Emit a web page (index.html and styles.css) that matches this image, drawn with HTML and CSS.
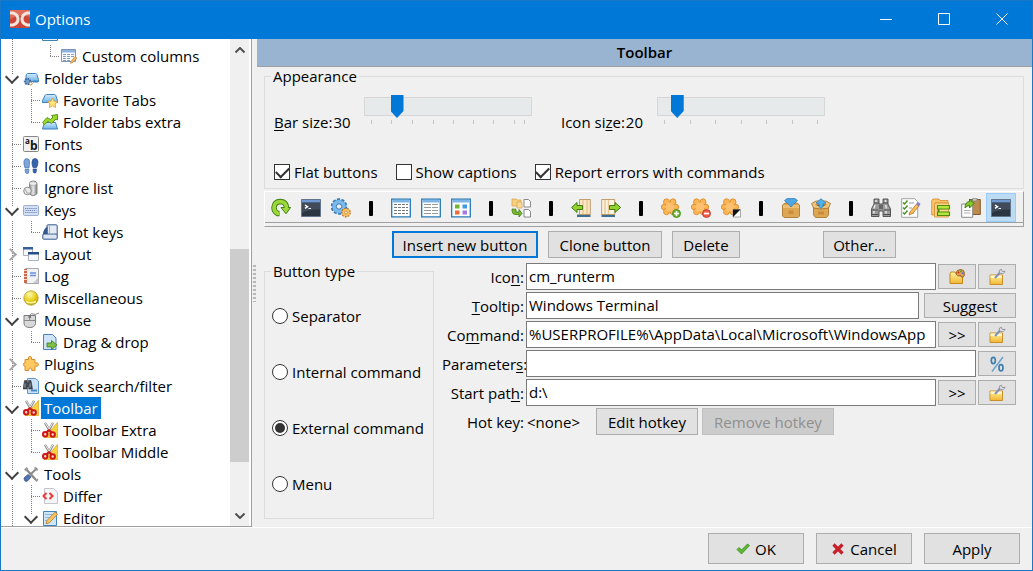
FILE: index.html
```html
<!DOCTYPE html>
<html lang="en">
<head>
<meta charset="utf-8">
<title>Options</title>
<link rel="stylesheet" href="styles.css">
</head>
<body>
<svg class="sprite" aria-hidden="true">
  <defs>
    <linearGradient id="gold" x1="0" y1="0" x2="0" y2="1"><stop offset="0" stop-color="#fff3a0"/><stop offset="1" stop-color="#f2b632"/></linearGradient>
    <linearGradient id="sky" x1="0" y1="0" x2="0" y2="1"><stop offset="0" stop-color="#d4ecfb"/><stop offset="1" stop-color="#6cb2e8"/></linearGradient>
    <linearGradient id="steel" x1="0" y1="0" x2="1" y2="0"><stop offset="0" stop-color="#8a8a8a"/><stop offset=".5" stop-color="#e8e8e8"/><stop offset="1" stop-color="#777"/></linearGradient>
    <radialGradient id="ball" cx=".4" cy=".25" r=".8"><stop offset="0" stop-color="#fffbb0"/><stop offset=".55" stop-color="#e8cf1c"/><stop offset="1" stop-color="#b99a00"/></radialGradient>
  </defs>
  <symbol id="i-cols" viewBox="0 0 16 16"><path d="M.5 1.500h14v12H.5z" fill="#f6f8fb" stroke="#8095b5"/><path d="M1 2h13v2.500H1z" fill="#8fb4e4"/><path d="M2 6.500h11M2 8.500h11M2 10.500h8M2 12.500h7" stroke="#8aa0bf"/><path d="M5.500 5v8M9.500 5v8" stroke="#fff"/><path d="M10 13.500l4-5 2 1.500-4 4.500-2.500.8z" fill="#f4b860" stroke="#b97b35" stroke-width=".6"/></symbol>
  <symbol id="i-ftabs" viewBox="0 0 16 16"><path d="M4.500 3.500h8q1 0 1.300 1l1.700 5v2H3V6q.3-2.500 1.500-2.500z" fill="url(#sky)" stroke="#3f83c3"/><path d="M10 11.500h5" stroke="#3f83c3" stroke-width="2"/><circle cx="4.500" cy="11.500" r="2.700" fill="#6fa0d6" stroke="#37659e" stroke-width="2" stroke-dasharray="1.500 1"/><circle cx="7.700" cy="13.500" r="1.500" fill="#fff" stroke="#b98b40"/></symbol>
  <symbol id="i-fav" viewBox="0 0 16 16"><path d="M4.500 2.500h8q1 0 1.300 1l1.700 5v2H.5v-2L3 3.500q.5-1 1.500-1z" fill="url(#sky)" stroke="#3f83c3"/><path d="M10.500 6l1.600 3.200 3.600.4-2.600 2.400.6 3.500-3.200-1.700-3.200 1.700.7-3.500L5.400 9.600l3.500-.4z" fill="#ffe27c" stroke="#d79c38" stroke-width=".8"/></symbol>
  <symbol id="i-extra" viewBox="0 0 16 16"><path d="M2.500 8.500h11l2 6.500H.5z" fill="url(#sky)" stroke="#3f83c3"/><path d="M.5 8.500L5 3.500 8.500 5.500l2.500-2.500L9.500 1.500l6-1V6l-1.500-1L9.500 9.500 6 7.500 2.500 10.500z" fill="#9ad82a" stroke="#4c8d10" stroke-width=".9"/></symbol>
  <symbol id="i-feet" viewBox="0 0 16 16"><path d="M1 3q.5-2.500 3-2.500 3 .5 2.500 4L6 10H2Q.5 6 1 3zM2 11.500h4L5.500 15q-1.500 1.200-3-.3z" fill="#7ba7dc" stroke="#456fa8" stroke-width=".7"/><path d="M9 4q.2-3.500 3-3.500 3 .3 3 3.500 0 3-1.500 5.500H10Q8.800 7 9 4zM10 11h3.500l-.4 3.500q-1.500 1-2.700 0z" fill="#3665b0" stroke="#244a87" stroke-width=".7"/></symbol>
  <symbol id="i-ignore" viewBox="0 0 16 16"><path d="M6.500 3.500Q6.500 1 10 1q4 0 4 2.500v10q-1 2-4 2t-3.500-2z" fill="url(#steel)" stroke="#888"/><ellipse cx="10" cy="3.500" rx="3.500" ry="1.800" fill="#eee" stroke="#aaa" stroke-width=".6"/><circle cx="4.500" cy="11" r="3.800" fill="#e9e9e9" stroke="#8d8d8d"/><path d="M2 9l2 4h3" fill="none" stroke="#aaa"/></symbol>
  <symbol id="i-keys" viewBox="0 0 16 16"><rect x=".5" y="3.500" width="15" height="10" rx="1" fill="#d4e0f4" stroke="#9badd0"/><path d="M2 6.500h12M2.500 8.500h11M2 10.500h12" stroke="#7189bb" stroke-dasharray="1.300 .8"/></symbol>
  <symbol id="i-hot" viewBox="0 0 16 16"><rect x="5" y=".8" width="10.200" height="11" rx="1" fill="#e4ebf4" stroke="#35598e"/><path d="M.8 11Q1 5 5.500 2.500V12z" fill="#32558c"/><rect x=".8" y="10" width="14.400" height="5.200" rx="1" fill="#dce6f3" stroke="#35598e"/><path d="M7.500 2v7.500H13" fill="none" stroke="#a2b3cc"/></symbol>
  <symbol id="i-layout" viewBox="0 0 16 16"><path d="M.5 1.500h9v8h-9z" fill="#f7f8fa" stroke="#a9b1bf"/><path d="M0 1h10v2.500H0z" fill="#35609a"/><path d="M5.500 6.500h10v8h-10z" fill="#f7f8fa" stroke="#a9b1bf"/><path d="M5 6h11v2.500H5z" fill="#264f8a"/></symbol>
  <symbol id="i-log" viewBox="0 0 16 16"><path d="M2.500.5h13v15h-13z" fill="#f2f2f4" stroke="#a8a8ad"/><path d="M1 1h3v14H1z" fill="#c96a4b"/><path d="M1 2.500h4M1 5.500h4M1 8.500h4M1 11.500h4" stroke="#f4d5c8"/><path d="M7 5h6M7 7.500h6" stroke="#6c8ee0" stroke-width="1.500"/><path d="M15 10l-5 5h5z" fill="#c9c9ce"/></symbol>
  <symbol id="i-misc" viewBox="0 0 16 16"><circle cx="8" cy="8" r="7.200" fill="url(#ball)" stroke="#b5a132" stroke-width=".8"/><path d="M3 11.500q5 2.500 10 0" fill="none" stroke="#fff59a" stroke-width="1.500"/></symbol>
  <symbol id="i-mouse" viewBox="0 0 16 16"><path d="M7 3Q8 .8 10 2t6-1" fill="none" stroke="#888"/><path d="M1 3.500h11.500v8q-.5 4-5.700 4T1 11.500z" fill="#d8d8d8" stroke="#7b7b7b"/><path d="M1 8.500h11.500M6.700 3.500v5" stroke="#888"/><path d="M5.500 3h2.500v3H5.500z" fill="#777"/></symbol>
  <symbol id="i-drag" viewBox="0 0 16 16"><path d="M1.500.5h9l3.500 3.500v11.500H1.500z" fill="#cfe4f8" stroke="#4a82bd"/><path d="M5 9h4.500V6.500L15 11l-5.500 4.500V13H5z" fill="#7fbf46" stroke="#3c7b1b" stroke-width=".8"/></symbol>
  <symbol id="i-plug" viewBox="0 0 16 16"><path d="M2 3.500h3.500Q4.500.5 7 .5t1.500 3H12V7q3.500-1 3.500 1.500T12 10v4.500H8.800q.7-2.500-1.500-2.500t-1.500 2.500H2V10Q.2 10 .2 8.500T2 7z" fill="#fbc95f" stroke="#d98c2b"/></symbol>
  <symbol id="i-quick" viewBox="0 0 16 16"><path d="M4.500.5h8L15.500 3v12.500H4.500z" fill="#cbe1f8" stroke="#5f95cd"/><path d="M8 12.500h6" stroke="#4a88c8" stroke-width="2"/><path d="M1.500 2.500h2.500V5h1.500V2.500H8L9.500 11H5.700V8.500H4V11H0z" fill="#444b55" stroke="#23272d" stroke-width=".5"/><path d="M2 5.500v4M7 5.500v4" stroke="#9aa3ae"/></symbol>
  <symbol id="i-cut" viewBox="0 0 16 16"><path d="M15.700.3v15.400H2z" fill="#f8d23f" stroke="#d6a21a" stroke-width=".7"/><path d="M3 .8l5.500 9M11 .8L6 10" stroke="#8d8d8d" stroke-width="2.400"/><path d="M3.300 1l5 8M10.700 1L6 9" stroke="#ececec" stroke-width="1"/><circle cx="3.200" cy="12.300" r="2.200" fill="#f6dcd0" stroke="#cf1717" stroke-width="2"/><circle cx="10.700" cy="12.500" r="2.200" fill="#f6dcd0" stroke="#cf1717" stroke-width="2"/><path d="M4 10.500l3-2.500 3 2.700" fill="none" stroke="#cf1717" stroke-width="2"/></symbol>
  <symbol id="i-tools" viewBox="0 0 16 16"><path d="M3 3l10 11" stroke="#888" stroke-width="2.200"/><path d="M1 3.500L3.500 1 5.500 3 3 5.500zM12 14.500l2.500-2 1 1.500-2 2z" fill="#999"/><path d="M14 2L7 9" stroke="#8a8a8a" stroke-width="2"/><path d="M12 1l.5 2.500L15 4" fill="none" stroke="#999" stroke-width="1.500"/><path d="M1 12l4-3.500L8 11l-3.500 4q-3 1.500-3.500-3z" fill="#5274b3" stroke="#33507f" stroke-width=".8"/></symbol>
  <symbol id="i-differ" viewBox="0 0 16 16"><path d="M2.500.5h9l4 4v11h-13z" fill="#f5f5f7" stroke="#c4c4ca"/><path d="M4.500 5L1.500 8l3 3M7.500 5l3 3-3 3" fill="none" stroke="#e93a36" stroke-width="2"/></symbol>
  <symbol id="i-edit" viewBox="0 0 16 16"><path d="M1.500 1.500h13v14h-13z" fill="#cfe5f9" stroke="#4583bf"/><path d="M3 4.500h9M3 7.500h7M3 10.500h5" stroke="#8bb8e2"/><path d="M5 10.500l8-8.500 2.500 2.200-8 8.500-3.500 1z" fill="#fbc461" stroke="#b57a2a" stroke-width=".8"/></symbol>

  <symbol id="t-refresh" viewBox="0 0 20 20"><path d="M8.500 15.500H6.500Q2.800 13 3 9.300 3.500 3.700 9.500 3.500 15.500 4 15.500 10" fill="none" stroke="#3f7d12" stroke-width="5.400"/><path d="M10 9.500h9.600L15 15.800z" fill="#9cd83a" stroke="#3f7d12"/><path d="M8 15.500H6.500Q2.800 13 3 9.300 3.500 3.700 9.500 3.500 15.500 4 15.500 10.500" fill="none" stroke="#9cd83a" stroke-width="3.600"/></symbol>
  <symbol id="t-term" viewBox="0 0 20 20"><path d="M.5 1.500h19v17H.5z" fill="#2b3441" stroke="#63758c"/><path d="M1 2h18v2.500H1z" fill="#6f9bd2"/><path d="M1 5h18v6.500Q8 11 1 15z" fill="#414b59"/><path d="M4 7l2.500 1.700L4 10.400" fill="none" stroke="#fff" stroke-width="1.500"/><path d="M7.500 10.500H10" stroke="#eee"/></symbol>
  <symbol id="t-gears" viewBox="0 0 20 20"><circle cx="8" cy="8.500" r="7" fill="#6eaee4" stroke="#387bb7" stroke-width="2.600" stroke-dasharray="3 1.400"/><circle cx="8" cy="8.500" r="6.600" fill="#7bb9ec"/><circle cx="8" cy="8.500" r="2.700" fill="#f0f0f0" stroke="#387bb7"/><circle cx="15" cy="14.500" r="3.900" fill="#f7bb56" stroke="#bd7921" stroke-width="2" stroke-dasharray="1.700 1"/><circle cx="15" cy="14.500" r="3.600" fill="#f9c268"/><circle cx="15" cy="14.500" r="1.400" fill="#f6f6f6" stroke="#bd7921" stroke-width=".7"/></symbol>
  <symbol id="t-grid" viewBox="0 0 20 20"><path d="M.7 1.200h18.600v17.600H.7z" fill="#fff" stroke="#2779b5" stroke-width="1.300"/><path d="M1.500 2h17v2.500h-17z" fill="#7cb5e5"/><path d="M3 6.500h14M3 9.500h14M3 12.500h14M3 15.500h14" stroke="#777" stroke-dasharray="3 1"/></symbol>
  <symbol id="t-list" viewBox="0 0 20 20"><path d="M.7 1.200h18.600v17.600H.7z" fill="#fff" stroke="#2779b5" stroke-width="1.300"/><path d="M1.500 2h17v2.500h-17z" fill="#7cb5e5"/><path d="M3 6.500h7M3 9.500h7M3 12.500h7M3 15.500h7M11 6.500h6M11 9.500h6M11 12.500h6M11 15.500h6" stroke="#999"/></symbol>
  <symbol id="t-thumb" viewBox="0 0 20 20"><path d="M.7 1.200h18.600v17.600H.7z" fill="#fff" stroke="#2779b5" stroke-width="1.300"/><path d="M1.500 2h17v2.500h-17z" fill="#7cb5e5"/><path d="M4 6.500h4.500v4H4z" fill="#71b62d"/><path d="M11.500 6.500H16v4h-4.500z" fill="#3e9ae8"/><path d="M4 12.500h4.500v4H4z" fill="#ef6d35"/><path d="M11.500 12.500H16v4h-4.500z" fill="#a27be8"/></symbol>
  <symbol id="t-branch" viewBox="0 0 20 20"><path d="M1 1h4l1 1h4v6H1z" fill="#f8cf80" stroke="#d59d44" stroke-width=".7"/><path d="M6 4h4l1 1v5H6z" fill="#fbdc9b" stroke="#d59d44" stroke-width=".7"/><path d="M1 11l4 .2V14h3v-2.500l3 4L8 19v-2.500H3.500Q1 16 1 11z" fill="#79ba27" stroke="#407b12" stroke-width=".8"/><path d="M13 1.500h4.500l2 2V9H13zM13 11.500h4.500l2 2V19H13z" fill="#fff" stroke="#888" stroke-width="1"/></symbol>
  <symbol id="t-left" viewBox="0 0 20 20"><path d="M6 16.500h13.500V19H6z" fill="#3d6d90"/><path d="M8.500 1.500h10.800v15H8.500z" fill="#fbe6c6" stroke="#b58a54" stroke-width=".8"/><path d="M12 2v14M16 2v14" stroke="#e9c797" stroke-width="1.500"/><path d="M.6 9.500L6 4.500v3h5.500v4H6v3z" fill="#92d12e" stroke="#407b12"/></symbol>
  <symbol id="t-right" viewBox="0 0 20 20"><path d="M.5 16.500H14V19H.5z" fill="#3d6d90"/><path d="M.7 1.500h13v15H.7z" fill="#fdf3e2" stroke="#b58a54" stroke-width=".8"/><path d="M4 2v14M7.500 2v14" stroke="#e9c797" stroke-width="1.500"/><path d="M19.600 9.500L14 4.500v3H8.500v4H14v3z" fill="#92d12e" stroke="#407b12"/></symbol>
  <symbol id="flower" viewBox="0 0 20 20"><g fill="#fbb654" stroke="#d88628" stroke-width=".8"><ellipse cx="5.500" cy="4.200" rx="3" ry="3.400"/><ellipse cx="12" cy="4.200" rx="3" ry="3.400"/><ellipse cx="3.500" cy="9" rx="3.300" ry="2.700"/><ellipse cx="14.500" cy="9" rx="3.300" ry="2.700"/><ellipse cx="5.500" cy="13.500" rx="3" ry="3.300"/><ellipse cx="12" cy="13.500" rx="3" ry="3.300"/></g><circle cx="9" cy="9" r="4.500" fill="#fdc071"/></symbol>
  <symbol id="t-add" viewBox="0 0 20 20"><use href="#flower"/><circle cx="15.500" cy="15.500" r="4" fill="#69b82a" stroke="#438716" stroke-width=".8"/><path d="M13 15.500h5M15.500 13v5" stroke="#fff" stroke-width="1.500"/></symbol>
  <symbol id="t-sub" viewBox="0 0 20 20"><use href="#flower"/><circle cx="15.500" cy="15.500" r="4" fill="#ed5b47" stroke="#bc3527" stroke-width=".8"/><path d="M13 15.500h5" stroke="#fff" stroke-width="1.700"/></symbol>
  <symbol id="t-inv" viewBox="0 0 20 20"><use href="#flower"/><path d="M12 11.500h7.500V19H12z" fill="#fff" stroke="#888" stroke-width=".7"/><path d="M12 11.500h7.500L12 19z" fill="#111"/></symbol>
  <symbol id="t-pack" viewBox="0 0 20 20"><path d="M1.500 7l2.500-2h12l2.500 2v11l-1.500 1.500H3L1.500 18z" fill="#dda653" stroke="#a66f26" stroke-width=".8"/><path d="M2 7h16v3H2z" fill="#edbf74"/><path d="M7.500 12.500h5v3.500h-5z" fill="#c98c3a"/><path d="M3.500 2.500L6 .6h8l2.500 1.900L13.500 5.500H13L10 9 7 5.500h-.5z" fill="#4fa8e4" stroke="#2579b6" stroke-width=".7"/></symbol>
  <symbol id="t-unpack" viewBox="0 0 20 20"><path d="M2.500 8h15v9l-2 2.500h-11l-2-2.500z" fill="#dda653" stroke="#a66f26" stroke-width=".8"/><path d="M.5 5.500L5 3h10l4.500 2.500-2 4.500L10 11 2.500 10z" fill="#f0c67e" stroke="#a66f26" stroke-width=".8"/><path d="M4 6.500h12L10 9.500z" fill="#8b5c22"/><path d="M7 13.500h6v3H7z" fill="#c98c3a"/><path d="M10 .7l5 4.300-3 1v2.500L10 10.500 8 8.500V6L5 5z" fill="#4fb1ea" stroke="#2579b6" stroke-width=".7"/></symbol>
  <symbol id="t-bino" viewBox="0 0 20 20"><path d="M3 1h5v5h4V1h5v5l2.500 5v7.500H12V13H8v5.500H.5V11L3 6z" fill="#9a9a9a" stroke="#4b4b4b" stroke-width=".9"/><path d="M1 12h6.500M12.500 12H19M3 5h5M12 5h5M1 16.500h6.500M12.500 16.500H19" stroke="#505050" stroke-width="1.200"/><path d="M8 7h4v4H8z" fill="#666"/><path d="M5 2v2M14.500 2v2M4 7l-1 3.500M14.500 7l1 3.500M3 13v2.500M15 13v2.500" stroke="#e6e6e6" stroke-width="1.500"/></symbol>
  <symbol id="t-check" viewBox="0 0 20 20"><path d="M.7.7h13l3 3v15.600H.7z" fill="#fff" stroke="#999" stroke-width=".9"/><path d="M2 4.500L3.500 6l3-3.500M2 9.500L3.500 11l3-3.500M2 14.500L3.500 16l3-3.500" fill="none" stroke="#438f1f" stroke-width="1.400"/><path d="M8 5h5M8 10h3M8 15h5" stroke="#999"/><path d="M9 14l6.500-8L18 8l-6.500 7.500L8 17z" fill="#fbbc51" stroke="#a46f2b" stroke-width=".7"/><path d="M15 6l2-2 2.500 2L18 8.500z" fill="#8a7bd4"/></symbol>
  <symbol id="t-folders" viewBox="0 0 20 20"><path d="M.7 2.500L2 1h6l1 1.500h8V5H4v12H.7z" fill="#fbc46a" stroke="#d68a2d" stroke-width=".8"/><path d="M3.500 6.500l1-1.500h13v14h-14z" fill="#fbd489" stroke="#d68a2d" stroke-width=".8"/><path d="M6.500 7.500h12v3.500h-12zM6.500 14h12v3.500h-12z" fill="#b4e63c" stroke="#508b12" stroke-width="1.200"/><path d="M7.500 11v3" stroke="#508b12" stroke-width="2"/></symbol>
  <symbol id="t-clip" viewBox="0 0 20 20"><path d="M9 1.500h10.300v15H9z" fill="#bd8a4e" stroke="#825a2c"/><path d="M11.500.5h4.500v2.500h-4.500z" fill="#c9c9c9" stroke="#777" stroke-width=".6"/><path d="M.7 6h11v13.300H.7z" fill="#fff" stroke="#888"/><path d="M3 12.500h6.500M3 15h6.500" stroke="#aaa"/><path d="M4 10Q4 4 8.500 3.500V1L13 5.500 8.500 10V7.500Q6 7.500 4 10z" fill="#85c92d" stroke="#407b12"/></symbol>

  <symbol id="b-wrench" viewBox="0 0 18 18"><path d="M2 7h12.500v9.500H2z" fill="url(#gold)" stroke="#c98f2b"/><path d="M2.500 7.500h11.500v2.500H2.500z" fill="#fff7c8"/><path d="M7 10l5-5.500" stroke="#818fbd" stroke-width="2"/><path d="M13.500 1.300q-3 .2-2.200 3l1.500 1.200q3.500.8 4.200-2.500l-2 .7-1.300-1z" fill="#dedee6" stroke="#8d8d99" stroke-width=".9"/></symbol>
  <symbol id="b-paint" viewBox="0 0 18 18"><path d="M2 5.500l1-1.500h4l1 1.500h6.500v10H2z" fill="url(#gold)" stroke="#c5861d"/><path d="M8 5.500q.5-4 4.500-4t4 4-2.500 3.500q-1.500 0-1.500-1.500Q9 9 8 5.500z" fill="#e0a04e" stroke="#8d4b19" stroke-width=".8"/><circle cx="10.500" cy="4.500" r="1" fill="#d42b20"/><circle cx="13" cy="3.300" r="1" fill="#4fae2b"/><circle cx="14.800" cy="5.200" r="1" fill="#4b79dd"/></symbol>
  <symbol id="b-pct" viewBox="0 0 18 18"><path d="M15 2L4 16.500" stroke="#6ba3cb" stroke-width="1.500"/><ellipse cx="5.300" cy="5.500" rx="2" ry="3.200" fill="none" stroke="#3c7fae" stroke-width="1.700"/><ellipse cx="13" cy="12.800" rx="2" ry="3.200" fill="none" stroke="#3c7fae" stroke-width="1.700"/></symbol>
</svg>

<div class="window">
  <header class="titlebar">
    <svg class="logo" viewBox="0 0 20 18"><path d="M0 0h20v18H0z" fill="#cc4638"/><path d="M0 0h20v7Q10 3 0 9z" fill="#df6b5a"/><path d="M0 3h3Q8 4.500 8 9t-5 6H0M20 3h-3q-5 1.500-5 6t5 6h3" fill="none" stroke="#f3e3da" stroke-width="3"/></svg>
    <h1>Options</h1>
    <button class="winbtn" type="button" aria-label="Minimize"><svg viewBox="0 0 12 12"><path d="M0 6.500h12"/></svg></button>
    <button class="winbtn" type="button" aria-label="Maximize"><svg viewBox="0 0 12 12"><path d="M.5.5h11v11H.5z"/></svg></button>
    <button class="winbtn" type="button" aria-label="Close"><svg viewBox="0 0 12 12"><path d="M.5.5l11 11M11.500.5l-11 11"/></svg></button>
  </header>

  <div class="main">
    <nav class="side">
      <ul class="tree" role="tree">
        <li><i class="v"></i><i></i><svg class="ico" viewBox="0 0 16 16"><path d="M.5 2.500h15v12H.5z" fill="#e8f2fb" stroke="#3f83b3"/></svg><span></span></li>
        <li><i class="v"></i><i></i><i class="l"></i><svg class="ico"><use href="#i-cols"/></svg><span>Custom columns</span></li>
        <li><i class="v open"></i><svg class="ico"><use href="#i-ftabs"/></svg><span>Folder tabs</span></li>
        <li><i class="v"></i><i class="t"></i><svg class="ico"><use href="#i-fav"/></svg><span>Favorite Tabs</span></li>
        <li><i class="v"></i><i class="l"></i><svg class="ico"><use href="#i-extra"/></svg><span>Folder tabs extra</span></li>
        <li><i class="t"></i><svg class="ico letters" viewBox="0 0 16 16"><rect x=".5" y=".5" width="15" height="15" rx="1"/><text x="2" y="8" font-size="8">a</text><text x="7" y="14" font-size="12">b</text></svg><span>Fonts</span></li>
        <li><i class="t"></i><svg class="ico"><use href="#i-feet"/></svg><span>Icons</span></li>
        <li><i class="t"></i><svg class="ico"><use href="#i-ignore"/></svg><span>Ignore list</span></li>
        <li><i class="v open"></i><svg class="ico"><use href="#i-keys"/></svg><span>Keys</span></li>
        <li><i class="v"></i><i class="l"></i><svg class="ico"><use href="#i-hot"/></svg><span>Hot keys</span></li>
        <li><i class="v shut"></i><svg class="ico"><use href="#i-layout"/></svg><span>Layout</span></li>
        <li><i class="t"></i><svg class="ico"><use href="#i-log"/></svg><span>Log</span></li>
        <li><i class="t"></i><svg class="ico"><use href="#i-misc"/></svg><span>Miscellaneous</span></li>
        <li><i class="v open"></i><svg class="ico"><use href="#i-mouse"/></svg><span>Mouse</span></li>
        <li><i class="v"></i><i class="l"></i><svg class="ico"><use href="#i-drag"/></svg><span>Drag &amp; drop</span></li>
        <li><i class="v shut"></i><svg class="ico"><use href="#i-plug"/></svg><span>Plugins</span></li>
        <li><i class="t"></i><svg class="ico"><use href="#i-quick"/></svg><span>Quick search/filter</span></li>
        <li class="selected"><i class="v open"></i><svg class="ico"><use href="#i-cut"/></svg><span>Toolbar</span></li>
        <li><i class="v"></i><i class="t"></i><svg class="ico"><use href="#i-cut"/></svg><span>Toolbar Extra</span></li>
        <li><i class="v"></i><i class="l"></i><svg class="ico"><use href="#i-cut"/></svg><span>Toolbar Middle</span></li>
        <li><i class="v open"></i><svg class="ico"><use href="#i-tools"/></svg><span>Tools</span></li>
        <li><i class="v"></i><i class="t"></i><svg class="ico"><use href="#i-differ"/></svg><span>Differ</span></li>
        <li><i class="v"></i><i class="v open"></i><svg class="ico"><use href="#i-edit"/></svg><span>Editor</span></li>
      </ul>
      <div class="scrollbar">
        <button type="button" aria-label="Scroll up"><svg viewBox="0 0 10 6"><path d="M.5 5.500L5 1l4.500 4.500"/></svg></button>
        <div class="track"><div class="thumb"></div></div>
        <button type="button" aria-label="Scroll down"><svg viewBox="0 0 10 6"><path d="M.5.5L5 5 9.500.5"/></svg></button>
      </div>
    </nav>
    <div class="splitter"><div class="grip"></div></div>

    <main class="page">
      <h2>Toolbar</h2>
      <div class="content">
        <fieldset class="appearance">
          <legend>Appearance</legend>
          <div class="sizes">
            <label for="bar"><u>B</u>ar size:<output>30</output></label>
            <div class="slider">
              <input id="bar" type="range" min="20" max="80" value="30">
              <svg viewBox="0 0 168 5"><path d="M7.500 1v4M27.500 1v4M48.500 1v4M69.500 1v4M89.500 1v4M109.500 1v4M129.500 1v4M150.500 1v4M160.500 1v4"/></svg>
            </div>
            <label for="icosize" class="second">Icon si<u>z</u>e:<output>20</output></label>
            <div class="slider">
              <input id="icosize" type="range" min="16" max="64" value="20">
              <svg viewBox="0 0 168 5"><path d="M7.500 1v4M33.500 1v4M58.500 1v4M84.500 1v4M109.500 1v4M135.500 1v4M160.500 1v4"/></svg>
            </div>
          </div>
          <div class="checks">
            <label><input type="checkbox" checked>Flat buttons</label>
            <label><input type="checkbox">Show captions</label>
            <label><input type="checkbox" checked>Report errors with commands</label>
          </div>
        </fieldset>

        <div class="toolbar" role="toolbar">
          <button type="button" aria-label="Refresh"><svg><use href="#t-refresh"/></svg></button>
          <button type="button" aria-label="Terminal"><svg><use href="#t-term"/></svg></button>
          <button type="button" aria-label="Options"><svg><use href="#t-gears"/></svg></button>
          <div class="sep"></div>
          <button type="button" aria-label="Brief view"><svg><use href="#t-grid"/></svg></button>
          <button type="button" aria-label="Columns view"><svg><use href="#t-list"/></svg></button>
          <button type="button" aria-label="Thumbnails view"><svg><use href="#t-thumb"/></svg></button>
          <div class="sep"></div>
          <button type="button" aria-label="Flat view"><svg><use href="#t-branch"/></svg></button>
          <div class="sep"></div>
          <button type="button" aria-label="Back"><svg><use href="#t-left"/></svg></button>
          <button type="button" aria-label="Forward"><svg><use href="#t-right"/></svg></button>
          <div class="sep"></div>
          <button type="button" aria-label="Select group"><svg><use href="#t-add"/></svg></button>
          <button type="button" aria-label="Unselect group"><svg><use href="#t-sub"/></svg></button>
          <button type="button" aria-label="Invert selection"><svg><use href="#t-inv"/></svg></button>
          <div class="sep"></div>
          <button type="button" aria-label="Pack"><svg><use href="#t-pack"/></svg></button>
          <button type="button" aria-label="Unpack"><svg><use href="#t-unpack"/></svg></button>
          <div class="sep"></div>
          <button type="button" aria-label="Search"><svg><use href="#t-bino"/></svg></button>
          <button type="button" aria-label="Multi-rename"><svg><use href="#t-check"/></svg></button>
          <button type="button" aria-label="Synchronize"><svg><use href="#t-folders"/></svg></button>
          <button type="button" aria-label="Copy names"><svg><use href="#t-clip"/></svg></button>
          <button type="button" class="pressed" aria-label="Windows Terminal"><svg><use href="#t-term"/></svg></button>
        </div>

        <div class="actions">
          <button type="button" class="btn default wide">Insert new button</button>
          <button type="button" class="btn clone">Clone button</button>
          <button type="button" class="btn small">Delete</button>
          <button type="button" class="btn other">Other...</button>
        </div>

        <div class="detail">
          <fieldset class="types">
            <legend>Button type</legend>
            <label><input type="radio" name="type">Separator</label>
            <label><input type="radio" name="type">Internal command</label>
            <label><input type="radio" name="type" checked>External command</label>
            <label><input type="radio" name="type">Menu</label>
          </fieldset>
          <div class="form">
            <label for="f-icon">Ico<u>n</u>:</label>
            <div class="row"><input id="f-icon" type="text" value="cm_runterm"><button type="button" class="btn sq" aria-label="Choose icon"><svg><use href="#b-paint"/></svg></button><button type="button" class="btn sq" aria-label="Icon path"><svg><use href="#b-wrench"/></svg></button></div>
            <label for="f-tip"><u>T</u>ooltip:</label>
            <div class="row tip"><input id="f-tip" type="text" value="Windows Terminal"><button type="button" class="btn sq suggest">Suggest</button></div>
            <label for="f-cmd">Co<u>m</u>mand:</label>
            <div class="row"><input id="f-cmd" type="text" value="%USERPROFILE%\AppData\Local\Microsoft\WindowsApp"><button type="button" class="btn sq">&gt;&gt;</button><button type="button" class="btn sq" aria-label="Command path"><svg><use href="#b-wrench"/></svg></button></div>
            <label for="f-par">Parameter<u>s</u>:</label>
            <div class="row"><input id="f-par" type="text" value=""><button type="button" class="btn sq" aria-label="Variables"><svg><use href="#b-pct"/></svg></button></div>
            <label for="f-start">Start pat<u>h</u>:</label>
            <div class="row"><input id="f-start" type="text" value="d:\"><button type="button" class="btn sq">&gt;&gt;</button><button type="button" class="btn sq" aria-label="Start path options"><svg><use href="#b-wrench"/></svg></button></div>
            <span class="lab">Hot key:</span>
            <div class="row hot"><span>&lt;none&gt;</span><button type="button" class="btn edit">Edit hotkey</button><button type="button" class="btn remove" disabled>Remove hotkey</button></div>
          </div>
        </div>
      </div>
    </main>
  </div>

  <footer class="footer">
    <button type="button" class="btn"><svg viewBox="0 0 14 12"><path d="M1 6.500l2-2 2.500 2.500L11.500 1l2 1.500-8 8.500z" fill="#5cb832" stroke="#3d8a1c" stroke-width=".8"/></svg>OK</button>
    <button type="button" class="btn"><svg viewBox="0 0 14 12"><path d="M2.500 1.500l9 9M11.500 1.500l-9 9" stroke="#c8202b" stroke-width="3.200" fill="none"/></svg>Cancel</button>
    <button type="button" class="btn">Apply</button>
  </footer>
</div>
</body>
</html>
```

FILE: styles.css
```css
* { box-sizing: border-box; }

body {
  margin: 0;
  background: #f0f0f0;
  color: #000;
  font: 15px/20px "Open Sans", "Noto Sans", sans-serif;
}

button, input { font: inherit; color: inherit; margin: 0; }
button { padding: 0; }
u { text-underline-offset: 2px; }
.sprite { position: absolute; width: 0; height: 0; }

.window {
  display: grid;
  grid-template-rows: auto minmax(0, 1fr) auto;
  height: 100vh;
  border: 1px solid #1a77c4;
}

/* Title bar */
.titlebar {
  display: flex;
  align-items: center;
  height: 38px;
  padding: 0 1px 2px 9px;
  background: #0078d7;
  color: #fff;
}
.titlebar h1 { flex: 1; margin: 0 0 0 5px; font-size: 15px; font-weight: 400; }
.logo { width: 20px; height: 18px; }
.winbtn { width: 58px; height: 36px; border: 0; background: none; }
.winbtn svg { display: block; width: 12px; height: 12px; margin: auto; fill: none; stroke: #fff; }

.main { display: flex; min-height: 0; }

/* Navigation tree */
.side {
  display: flex;
  width: 251px;
  overflow: hidden;
  background: #fff;
  border-right: 1px solid #a0a0a0;
  border-bottom: 1px solid #a0a0a0;
}
.tree { flex: 1; margin: -16px 0 0; padding: 0 0 0 1px; list-style: none; }
.tree li { display: flex; align-items: center; height: 22px; }
.tree i { width: 19px; height: 22px; background-repeat: no-repeat; }
.tree .v {
  background-image: repeating-linear-gradient(#808080 0 1px, transparent 1px 2px);
  background-position: 10px 0;
  background-size: 1px 22px;
}
.tree .t, .tree .l {
  background-image: repeating-linear-gradient(#808080 0 1px, transparent 1px 2px), repeating-linear-gradient(90deg, #808080 0 1px, transparent 1px 2px);
  background-position: 10px 0, 10px 11px;
  background-size: 1px 22px, 9px 1px;
}
.tree .l { background-size: 1px 11px, 9px 1px; }
.tree .open, .tree .shut { display: grid; place-items: center; background-size: 1px 8px; }
.tree .open { padding-bottom: 3px; }
.tree .shut { background-size: 1px 22px; }
.tree .open::before, .tree .shut::before {
  content: "";
  width: 8px;
  height: 8px;
  border: solid #404040;
  border-width: 0 2px 2px 0;
  transform: rotate(45deg);
}
.tree .shut { padding-right: 3px; }
.tree .shut::before { width: 7px; height: 7px; border-color: #a6a6a6; transform: rotate(-45deg); }
.ico { width: 16px; height: 16px; margin: 0 2px; }
.letters { fill: #111; font-weight: 700; }
.letters rect { fill: #f1f1f1; stroke: #888; }
.tree span { padding: 0 3px; line-height: 22px; white-space: nowrap; }
.tree .selected span { background: #0078d7; color: #fff; }

.scrollbar { display: flex; flex-direction: column; width: 19px; margin-right: 2px; background: #f0f0f0; }
.scrollbar button { height: 21px; border: 0; background: none; }
.scrollbar svg { display: block; width: 10px; height: 6px; margin: auto; fill: none; stroke: #505050; stroke-width: 2; }
.track { display: grid; flex: 1; grid-template-rows: 189fr 212fr 43fr; }
.thumb { grid-row: 2; background: #cdcdcd; }

.splitter { display: grid; place-items: center; width: 5px; }
.grip {
  width: 3px;
  height: 37px;
  background: repeating-linear-gradient(#b8b8b8 0 2px, transparent 2px 4px);
}

/* Page */
.page { flex: 1; min-width: 0; overflow: hidden; }
.page h2 {
  margin: 0;
  padding: 3px 0 4px;
  background: #99b4d1;
  border-bottom: 1px solid #a0a0a0;
  font-size: 15px;
  font-weight: 600;
  text-align: center;
}
.content { padding: 0 8px 0 7px; }
fieldset { min-width: 0; margin: 0; padding: 0; border: 1px solid #dcdcdc; }
legend { margin-left: 6px; padding: 0 2px; line-height: 18px; }

.appearance { height: 122px; }
.sizes { display: flex; align-items: flex-start; padding: 10px 9px 0; }
.sizes label { width: 90px; margin-top: 17px; white-space: nowrap; }
.sizes output { margin-left: 1px; }
.sizes .second { width: 96px; margin-left: 29px; }
.slider { width: 168px; }
.slider input {
  display: block;
  width: 100%;
  height: 23px;
  appearance: none;
  background: none;
}
.slider input::-webkit-slider-runnable-track {
  height: 19px;
  background: #e7eaea;
  border: 1px solid #d6d6d6;
}
.slider input::-webkit-slider-thumb {
  width: 13px;
  height: 23px;
  margin-top: -3px;
  appearance: none;
  background: #0078d7;
  clip-path: polygon(0 0, 100% 0, 100% 70%, 50% 100%, 0 70%);
}
.slider svg { display: block; width: 100%; height: 5px; margin-top: 1px; stroke: #c4c4c4; }

.checks { display: flex; gap: 18px; padding: 30px 9px 0; }
.checks label, .types label { display: flex; align-items: center; gap: 4px; white-space: nowrap; }
input[type="checkbox"], input[type="radio"] {
  display: grid;
  place-items: center;
  width: 16px;
  height: 16px;
  appearance: none;
  background: #fff;
  border: 1px solid #333;
}
input[type="checkbox"]:checked::before {
  content: "";
  width: 11px;
  height: 6px;
  margin-bottom: 3px;
  border: solid #333;
  border-width: 0 0 2px 2px;
  transform: rotate(-45deg);
}
input[type="radio"] { border-radius: 50%; }
input[type="radio"]:checked::before {
  content: "";
  width: 10px;
  height: 10px;
  border-radius: 50%;
  background: #333;
}

.toolbar {
  display: flex;
  margin-top: 2px;
  padding: 1px 1px 0;
  height: 36px;
  border: 1px solid #a0a0a0;
  border-color: #fff #a0a0a0 #a0a0a0 #fff;
  background: linear-gradient(#a0a0a0, #a0a0a0) 0 30px / 100% 1px no-repeat;
}
.toolbar button { width: 30px; height: 29px; border: 1px solid transparent; background: none; }
.toolbar .pressed { background: #bcdcf4; border-color: #99ccff; }
.toolbar svg { display: block; width: 20px; height: 20px; margin: auto; }
.sep { width: 4px; height: 15px; margin: 8px 13px; border-radius: 1px; background: #000; }

.btn { border: 1px solid #adadad; background: #e1e1e1; white-space: nowrap; }
.btn:disabled { background: #cccccc; border-color: #bfbfbf; color: #8f8f8f; }
.actions { display: flex; gap: 10px; margin-top: 4px; padding-left: 128px; }
.actions .btn { height: 27px; }
.actions .wide { width: 146px; }
.actions .clone { width: 114px; }
.actions .small { width: 68px; }
.actions .other { width: 73px; margin-left: 73px; }
.actions .default { border: 2px solid #0078d7; }

.detail { display: flex; align-items: flex-start; gap: 8px; padding: 5px 8px 0 0; }
.types { width: 170px; height: 256px; }
.types legend { line-height: 16px; }
.types label { margin: 0 7px 36px; }
.types legend + label { margin-top: 27px; }
.form { display: grid; flex: 1; grid-template-columns: 82px minmax(0, 1fr); column-gap: 2px; row-gap: 2px; align-items: center; }
.form > label, .form .lab { text-align: right; white-space: nowrap; }
.row { display: flex; align-items: center; gap: 2px; height: 27px; }
.row input { flex: 1; min-width: 0; height: 27px; padding: 0 2px 2px; border: 1px solid #7a7a7a; background: #fff; }
.sq { width: 38px; height: 25px; }
.sq svg { display: block; width: 18px; height: 18px; margin: auto; }
.tip { gap: 5px; }
.suggest { width: 92px; }
.hot span { width: 68px; padding-left: 1px; }
.hot .btn { height: 27px; }
.edit { width: 102px; margin-right: 2px; }
.remove { width: 132px; }

.footer {
  display: flex;
  justify-content: flex-end;
  gap: 12px;
  padding: 5px 12px 6px;
  border-top: 1px solid #fff;
}
.footer .btn { display: flex; align-items: center; justify-content: center; gap: 5px; width: 96px; height: 31px; }
.footer svg { width: 14px; height: 12px; }
```
